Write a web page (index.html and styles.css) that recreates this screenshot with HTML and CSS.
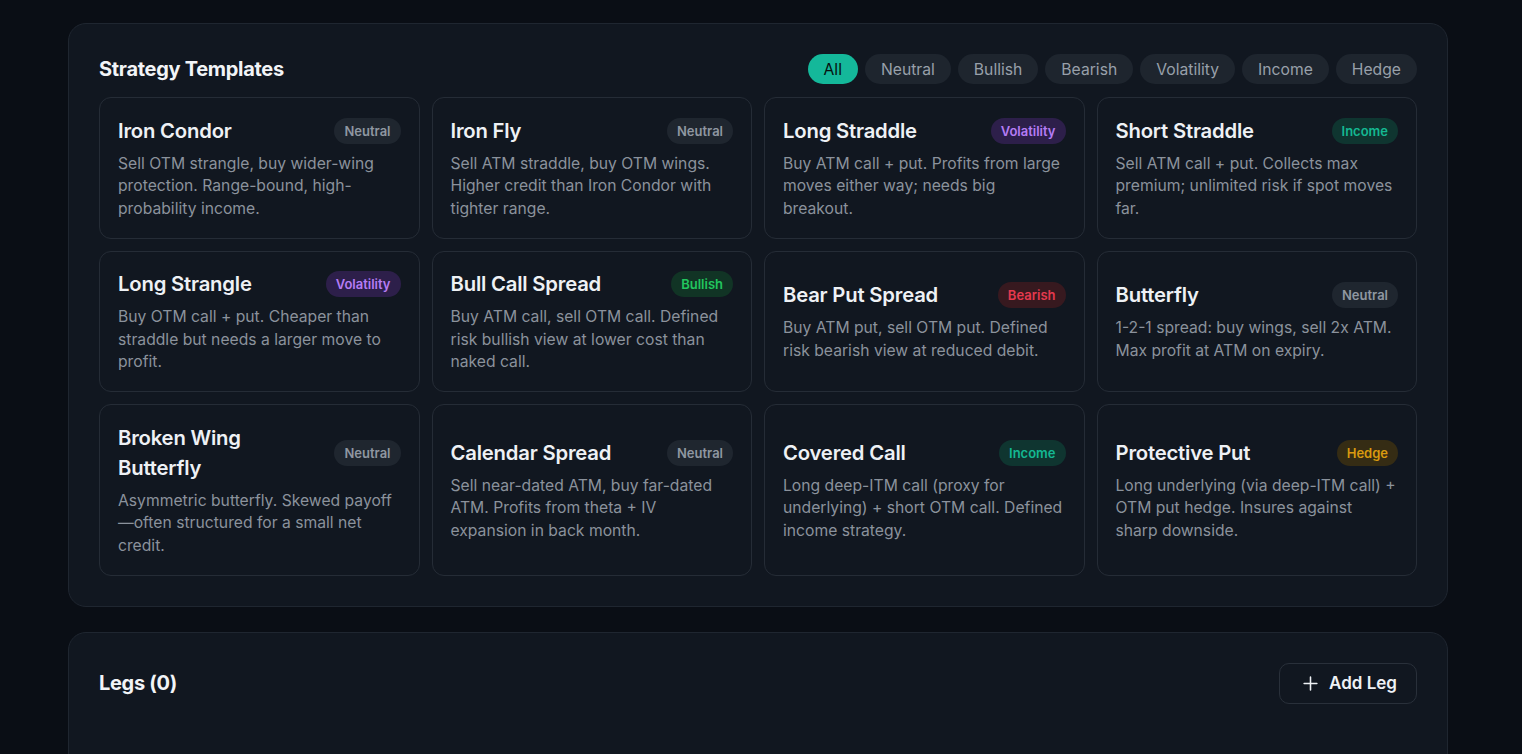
FILE: index.html
```html
<!DOCTYPE html>
<html lang="en">
<head>
  <meta charset="UTF-8" />
  <meta name="viewport" content="width=device-width, initial-scale=1.0" />
  <title>Strategy Builder</title>
  <link rel="stylesheet" href="styles.css">
</head>
<body>
  <main class="page">

    <!-- Strategy templates -->
    <section class="panel">
      <div class="panel-head">
        <h2>Strategy Templates</h2>
        <div class="filters">
          <button class="chip active">All</button>
          <button class="chip">Neutral</button>
          <button class="chip">Bullish</button>
          <button class="chip">Bearish</button>
          <button class="chip">Volatility</button>
          <button class="chip">Income</button>
          <button class="chip">Hedge</button>
        </div>
      </div>

      <div class="templates">
        <div class="card">
          <div class="card-head"><h3>Iron Condor</h3><span class="tag neutral">Neutral</span></div>
          <p>Sell OTM strangle, buy wider-wing protection. Range-bound, high-probability income.</p>
        </div>
        <div class="card">
          <div class="card-head"><h3>Iron Fly</h3><span class="tag neutral">Neutral</span></div>
          <p>Sell ATM straddle, buy OTM wings. Higher credit than Iron Condor with tighter range.</p>
        </div>
        <div class="card">
          <div class="card-head"><h3>Long Straddle</h3><span class="tag volatility">Volatility</span></div>
          <p>Buy ATM call + put. Profits from large moves either way; needs big breakout.</p>
        </div>
        <div class="card">
          <div class="card-head"><h3>Short Straddle</h3><span class="tag income">Income</span></div>
          <p>Sell ATM call + put. Collects max premium; unlimited risk if spot moves far.</p>
        </div>

        <div class="card">
          <div class="card-head"><h3>Long Strangle</h3><span class="tag volatility">Volatility</span></div>
          <p>Buy OTM call + put. Cheaper than straddle but needs a larger move to profit.</p>
        </div>
        <div class="card">
          <div class="card-head"><h3>Bull Call Spread</h3><span class="tag bullish">Bullish</span></div>
          <p>Buy ATM call, sell OTM call. Defined risk bullish view at lower cost than naked call.</p>
        </div>
        <div class="card">
          <div class="card-head"><h3>Bear Put Spread</h3><span class="tag bearish">Bearish</span></div>
          <p>Buy ATM put, sell OTM put. Defined risk bearish view at reduced debit.</p>
        </div>
        <div class="card">
          <div class="card-head"><h3>Butterfly</h3><span class="tag neutral">Neutral</span></div>
          <p>1-2-1 spread: buy wings, sell 2x ATM. Max profit at ATM on expiry.</p>
        </div>

        <div class="card">
          <div class="card-head"><h3>Broken Wing Butterfly</h3><span class="tag neutral">Neutral</span></div>
          <p>Asymmetric butterfly. Skewed payoff—often structured for a small net credit.</p>
        </div>
        <div class="card">
          <div class="card-head"><h3>Calendar Spread</h3><span class="tag neutral">Neutral</span></div>
          <p>Sell near-dated ATM, buy far-dated ATM. Profits from theta + IV expansion in back month.</p>
        </div>
        <div class="card">
          <div class="card-head"><h3>Covered Call</h3><span class="tag income">Income</span></div>
          <p>Long deep-ITM call (proxy for underlying) + short OTM call. Defined income strategy.</p>
        </div>
        <div class="card">
          <div class="card-head"><h3>Protective Put</h3><span class="tag hedge">Hedge</span></div>
          <p>Long underlying (via deep-ITM call) + OTM put hedge. Insures against sharp downside.</p>
        </div>
      </div>
    </section>

    <!-- Legs -->
    <section class="panel legs">
      <div class="panel-head">
        <h2>Legs (0)</h2>
        <button class="btn-add">
          <svg width="17" height="17" viewBox="0 0 24 24" fill="none" stroke="currentColor" stroke-width="2.2" stroke-linecap="round">
            <path d="M12 3v18M3 12h18" />
          </svg>
          Add Leg
        </button>
      </div>
    </section>

  </main>
</body>
</html>
```

FILE: styles.css
```css
:root {
  --page-bg: #0a0e15;
  --panel-bg: #111720;
  --panel-border: #1f2630;
  --card-border: #252c36;
  --text: #eef1f5;
  --muted: #8b929c;
  --chip-bg: #1e252e;
  --chip-text: #98a0aa;
  --accent: #14b89a;
}

* {
  margin: 0;
  padding: 0;
  box-sizing: border-box;
}

body {
  background: var(--page-bg);
  color: var(--text);
  font-family: Inter, 'Noto Sans', sans-serif;
  height: 754px;
  overflow: hidden;
}

.page {
  width: 1380px;
  margin-left: 68px;
  padding-top: 23px;
  display: flex;
  flex-direction: column;
  gap: 25px;
}

.panel {
  background: var(--panel-bg);
  border: 1px solid var(--panel-border);
  border-radius: 18px;
  padding: 30px;
}

.panel.legs {
  min-height: 200px;
}

.panel-head {
  display: flex;
  align-items: center;
  justify-content: space-between;
}

.panel-head h2 {
  font-size: 20px;
  font-weight: 700;
  letter-spacing: -0.3px;
  color: #f2f4f7;
}

.filters {
  display: flex;
  gap: 7px;
}

.chip {
  height: 30px;
  padding: 0 16px;
  border: none;
  border-radius: 15px;
  background: var(--chip-bg);
  color: var(--chip-text);
  font-family: inherit;
  font-size: 15.7px;
  cursor: pointer;
}

.chip.active {
  background: var(--accent);
  color: #07110f;
}

.templates {
  margin-top: 13px;
  display: grid;
  grid-template-columns: repeat(4, 1fr);
  gap: 12px;
}

.card {
  border: 1px solid var(--card-border);
  border-radius: 12px;
  padding: 17.5px 18px;
  display: flex;
  flex-direction: column;
  justify-content: center;
}

.card-head {
  display: flex;
  align-items: center;
  justify-content: space-between;
  gap: 12px;
  margin-bottom: 7px;
}

.card-head h3 {
  font-size: 20.3px;
  font-weight: 600;
  line-height: 30px;
  letter-spacing: -0.2px;
  color: var(--text);
}

.card p {
  font-size: 15.7px;
  line-height: 22.5px;
  color: var(--muted);
}

.tag {
  flex-shrink: 0;
  height: 26px;
  line-height: 26px;
  padding: 0 10px;
  border-radius: 13px;
  font-size: 13px;
  font-weight: 600;
}

.tag.neutral { background: #1f262f; color: #8f97a1; }
.tag.volatility { background: #2d1f4a; color: #b57cf5; }
.tag.income { background: #0f3530; color: #14b892; }
.tag.bullish { background: #113425; color: #22c55e; }
.tag.bearish { background: #37191f; color: #e5394e; }
.tag.hedge { background: #352c14; color: #d99a0f; }

.btn-add {
  height: 41px;
  padding: 0 19px 0 22px;
  display: flex;
  align-items: center;
  gap: 10px;
  background: transparent;
  border: 1px solid #29303a;
  border-radius: 10px;
  color: #eef1f5;
  font-family: inherit;
  font-size: 17px;
  font-weight: 600;
  cursor: pointer;
}
```
